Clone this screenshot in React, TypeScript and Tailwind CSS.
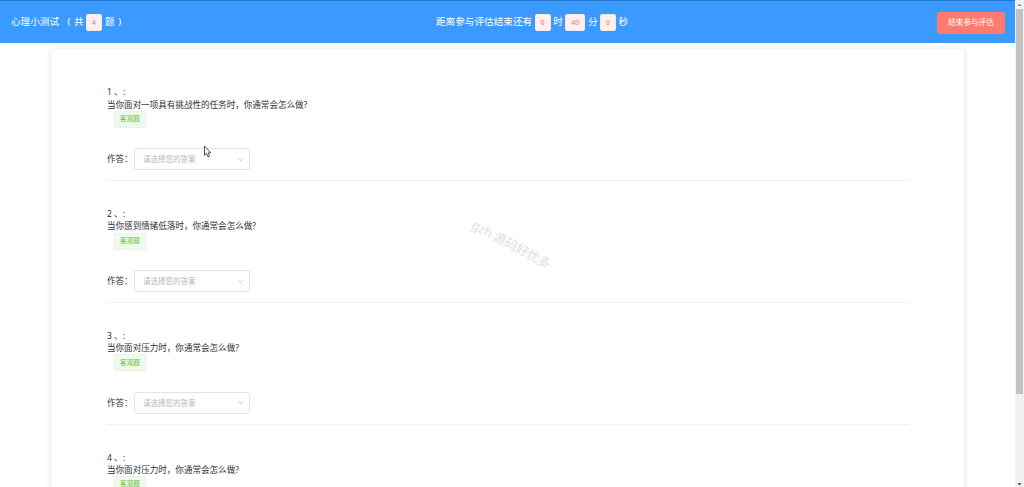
import type { ReactNode } from "react";

const questions = [
  "当你面对一项具有挑战性的任务时，你通常会怎么做?",
  "当你感到情绪低落时，你通常会怎么做?",
  "当你面对压力时，你通常会怎么做?",
  "当你面对压力时，你通常会怎么做?",
];

function CountBadge({ children, wide = false }: { children: ReactNode; wide?: boolean }) {
  return (
    <span
      className={`flex h-[17px] items-center justify-center rounded-[2px] border border-[#fde8e8] bg-[#fef0f0] pt-px text-[6.6px] text-[#f56c6c] ${
        wide ? "w-[20px]" : "w-[16px]"
      }`}
    >
      {children}
    </span>
  );
}

function Header() {
  return (
    <header className="flex h-[43px] shrink-0 items-center border-t border-[#2674c8] bg-[#3a9aff] pt-px text-[9.65px] whitespace-nowrap text-white">
      <div className="flex w-[436px] items-center pl-[11px]">
        <span className="w-[53px]">心理小测试</span>
        <span className="w-[10px] text-center">(</span>
        <span className="w-[12px]">共</span>
        <CountBadge>4</CountBadge>
        <span className="ml-[3px]">题</span>
        <span className="ml-[3.5px]">)</span>
      </div>
      <div className="flex flex-1 items-center">
        <span className="mr-[2.5px]">距离参与评估结束还有</span>
        <CountBadge>0</CountBadge>
        <span className="mr-[2.5px] ml-[2.5px]">时</span>
        <CountBadge wide>40</CountBadge>
        <span className="mr-[2.5px] ml-[2.5px]">分</span>
        <CountBadge>0</CountBadge>
        <span className="ml-[2.5px]">秒</span>
      </div>
      <button className="mr-[10px] h-[22px] w-[68px] rounded-[3px] bg-[#ff7b70] text-[7.6px] text-white">
        结束参与评估
      </button>
    </header>
  );
}

function Question({ index, text }: { index: number; text: string }) {
  return (
    <section className="h-[121.8px] shrink-0 text-[8.56px] leading-[12.2px] text-[#303133]">
      <div className="flex whitespace-pre">
        <span className="w-[16px]">{index} 、</span>
        <span>:</span>
      </div>
      <div>{text}</div>
      <div className="ml-[7px] flex h-[17px] w-[32px] items-center justify-center rounded-[2px] border border-[#e8f5e1] bg-[#f0f9eb] text-[6.6px] text-[#67c23a]">
        客观题
      </div>
      <div className="mt-[20.7px] flex h-[22px] items-center">
        <span className="w-[27px] whitespace-nowrap">作答：</span>
        <div className="flex h-[22px] w-[116.4px] items-center justify-between rounded-[2.5px] border border-[#e1e4ea] bg-white pr-[5px] pl-[8px] text-[7.5px] text-[#b4b8c0]">
          <span>请选择您的答案</span>
          <svg className="h-[7px] w-[7px]" viewBox="0 0 7 7" fill="none" stroke="#b9bdc6" strokeWidth="0.8">
            <path d="M0.8 2.2 3.5 4.9 6.2 2.2" />
          </svg>
        </div>
      </div>
      <div className="mt-[10px] border-t border-[#f0f1f3]" />
    </section>
  );
}

function Scrollbar() {
  return (
    <div className="flex h-full w-[9px] shrink-0 flex-col items-center bg-[#f1f1f1]">
      <svg className="h-[9px] w-[9px] shrink-0" viewBox="0 0 9 9">
        <path d="M2.5 6 4.5 3.8 6.5 6Z" fill="#8a8a8a" />
      </svg>
      <div className="h-[385px] w-[7px] bg-[#c1c1c1]" />
      <div className="flex-1" />
      <svg className="h-[6px] w-[9px] shrink-0" viewBox="0 0 9 6">
        <path d="M2.5 2 4.5 4.5 6.5 2Z" fill="#505050" />
      </svg>
    </div>
  );
}

export default function App() {
  return (
    <div className="relative flex h-[487px] w-[1024px] overflow-hidden bg-white font-['Noto_Sans','Noto_Sans_CJK_SC',sans-serif]">
      <div className="flex h-full w-[1015px] flex-col overflow-hidden">
        <Header />
        <main className="mt-[6px] ml-[51px] flex h-[600px] w-[913px] shrink-0 flex-col rounded-[2px] bg-white pt-[37.3px] pr-[55px] pl-[56px] shadow-[0_1px_6px_rgba(0,0,0,0.12)]">
          {questions.map((text, i) => (
            <Question key={i} index={i + 1} text={text} />
          ))}
        </main>
      </div>
      <Scrollbar />
      <div className="pointer-events-none absolute top-[236px] left-[466px] w-[90px] rotate-[28deg] text-center text-[12.5px] leading-[18px] whitespace-nowrap text-[#dedede]">
        gzh 源码好优多
      </div>
      <svg className="absolute top-[145px] left-[203px] h-[13px] w-[9px]" viewBox="0 0 9 13">
        <path
          d="M1.5 1V10.3L3.6 8.4 5 11.8 6.5 11.1 5.1 7.9H7.9Z"
          fill="white"
          stroke="#3c3c44"
          strokeWidth="0.9"
        />
      </svg>
    </div>
  );
}
